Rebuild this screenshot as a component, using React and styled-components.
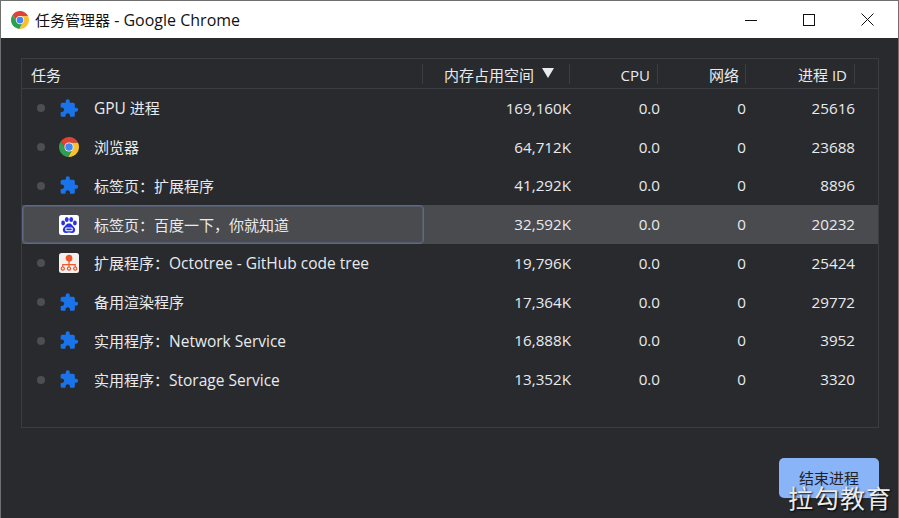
import React from 'react';
import styled, { createGlobalStyle } from 'styled-components';
import { MdExtension } from 'react-icons/md';

const FONT = '"Open Sans", "Noto Sans CJK SC", sans-serif';

const Global = createGlobalStyle`
html, body { margin: 0; padding: 0; background: #292a2d; }
* { box-sizing: border-box; }
`;

const Win = styled.div`
position: relative;
width: 899px;
height: 518px;
display: flex;
flex-direction: column;
overflow: hidden;
border: 1px solid #707070;
border-bottom: 0;
background: #292a2d;
font-family: ${FONT};
font-size: 15px;
color: #e8eaed;
`;

const TitleBar = styled.div`
height: 37px;
flex: none;
background: #fff;
display: flex;
align-items: center;
padding: 0 2px 0 10px;
color: #111;
`;

const Title = styled.div`
flex: 1;
margin-left: 6px;
font-size: 15px;
line-height: 36px;
white-space: nowrap;
`;

const TitleLatin = styled.span`
font-size: 16px;
`;

const WinBtn = styled.div`
width: 58px;
height: 37px;
display: flex;
align-items: center;
justify-content: center;
`;

const Content = styled.div`
flex: 1;
padding: 20px 19px 0 20px;
display: flex;
flex-direction: column;
`;

const Panel = styled.div`
height: 370px;
border: 1px solid #3c3d40;
`;

const Head = styled.div`
height: 30px;
display: grid;
grid-template-columns: 401px 147px 88px 88px 109px;
align-items: center;
border-bottom: 1px solid #3c3d40;
color: #e8eaed;
`;

const HeadCell = styled.div`
height: 20px;
line-height: 23px;
padding: ${p => (p.$first ? '0 0 0 9px' : `0 ${p.$pad || 7}px 0 0`)};
text-align: ${p => (p.$first ? 'left' : 'right')};
border-right: 1px solid #3c3d40;
white-space: nowrap;
`;

const Arrow = styled.span`
display: inline-block;
margin-left: 8px;
width: 0;
height: 0;
border-left: 6px solid transparent;
border-right: 6px solid transparent;
border-top: 10px solid #e8eaed;
vertical-align: 3px;
`;

const Row = styled.div`
position: relative;
height: 38.75px;
display: grid;
grid-template-columns: 402px 147px 89px 86px 109px;
align-items: center;
background: ${p => (p.$selected ? '#4a4b4e' : 'transparent')};
`;

const NameCell = styled.div`
height: 38.75px;
display: flex;
align-items: center;
padding-left: 14px;
white-space: nowrap;
border-radius: 4px;
border: 1px solid ${p => (p.$selected ? '#5b6a85' : 'transparent')};
box-shadow: ${p => (p.$selected ? 'inset 0 0 0 1px #525c6e' : 'none')};
`;

const Dot = styled.span`
flex: none;
width: 8px;
height: 8px;
border-radius: 50%;
background: ${p => (p.$hidden ? 'transparent' : '#4d4e51')};
margin-right: 14px;
`;

const IconBox = styled.span`
flex: none;
width: 20px;
height: 20px;
display: flex;
align-items: center;
justify-content: center;
margin-right: 15px;
`;

const Puzzle = styled(MdExtension)`
width: 21px;
height: 21px;
color: #1a73e8;
`;

const Label = styled.span`
white-space: pre;
`;

const Latin = styled.span`
font-size: 15.5px;
`;

const Num = styled.div`
text-align: right;
font-size: 15.2px;
margin-top: -1px;
`;

const Footer = styled.div`
display: flex;
justify-content: flex-end;
margin-top: 30px;
`;

const EndBtn = styled.div`
width: 100px;
height: 40px;
border-radius: 5px;
background: #8ab4f8;
color: #202124;
font-size: 15px;
padding-bottom: 2px;
display: flex;
align-items: center;
justify-content: center;
`;

const Watermark = styled.div`
position: absolute;
right: 6px;
bottom: 6px;
font-size: 25px;
line-height: 30px;
letter-spacing: 1px;
color: #ececec;
text-shadow: 1px 1px 2px #000;
font-family: "Noto Sans CJK SC", sans-serif;
white-space: nowrap;
`;

function ChromeLogo({ size = 18 }) {
  const seg = 'M24 14H45.8A24 24 0 0 0 4.44 10.12L15.34 29A10 10 0 0 1 24 14Z';
  return (
    <svg width={size} height={size} viewBox="0 0 48 48">
      <path d={seg} fill="#db4437" />
      <path d={seg} fill="#fbc02d" transform="rotate(120 24 24)" />
      <path d={seg} fill="#2e9e4f" transform="rotate(240 24 24)" />
      <circle cx="24" cy="24" r="11" fill="#fff" />
      <circle cx="24" cy="24" r="9" fill="#4285f4" />
    </svg>
  );
}

function BaiduLogo() {
  return (
    <svg width="20" height="20" viewBox="0 0 20 20">
      <rect width="20" height="20" rx="2.5" fill="#fff" />
      <g fill="#2932e1">
        <ellipse cx="4.1" cy="8" rx="1.9" ry="2.4" />
        <ellipse cx="7.8" cy="4.6" rx="1.9" ry="2.5" />
        <ellipse cx="12.2" cy="4.6" rx="1.9" ry="2.5" />
        <ellipse cx="15.9" cy="8" rx="1.9" ry="2.4" />
        <path d="M10 8.2c2 0 3 1.6 4.2 3 1.3 1.4 2.2 2.4 1.9 4.2-.3 1.8-1.9 2.7-3.4 2.5-1-.1-1.8-.4-2.7-.4s-1.7.3-2.7.4c-1.5.2-3.1-.7-3.4-2.5-.3-1.8.6-2.8 1.9-4.2 1.2-1.4 2.2-3 4.4-3z" />
      </g>
      <rect x="6.3" y="12.6" width="7.4" height="3.6" rx="1" fill="#fff" />
      <rect x="7.3" y="13.4" width="5.4" height="1.8" rx=".6" fill="#2932e1" />
    </svg>
  );
}

function OctotreeLogo() {
  return (
    <svg width="20" height="20" viewBox="0 0 20 20">
      <rect width="20" height="20" rx="2.5" fill="#f3f0ee" />
      <g fill="none" stroke="#f0562a" strokeWidth="1.2">
        <circle cx="10" cy="5.2" r="2.8" fill="#f0562a" />
        <path d="M10 8v3.4M3.8 14v-2.4h12.4V14M10 11.4V14" />
        <circle cx="3.8" cy="15.6" r="1.6" />
        <circle cx="10" cy="15.6" r="1.6" />
        <circle cx="16.2" cy="15.6" r="1.6" />
      </g>
    </svg>
  );
}

const rows = [
  { icon: 'puzzle', name: 'GPU', rest: ' 进程', mem: '169,160K', pid: '25616' },
  { icon: 'chrome', name: '', rest: '浏览器', mem: '64,712K', pid: '23688' },
  { icon: 'puzzle', name: '', rest: '标签页：扩展程序', mem: '41,292K', pid: '8896' },
  { icon: 'baidu', name: '', rest: '标签页：百度一下，你就知道', mem: '32,592K', pid: '20232', selected: true },
  { icon: 'octotree', pre: '扩展程序：', name: 'Octotree - GitHub code tree', mem: '19,796K', pid: '25424' },
  { icon: 'puzzle', name: '', rest: '备用渲染程序', mem: '17,364K', pid: '29772' },
  { icon: 'puzzle', pre: '实用程序：', name: 'Network Service', mem: '16,888K', pid: '3952' },
  { icon: 'puzzle', pre: '实用程序：', name: 'Storage Service', mem: '13,352K', pid: '3320' },
];

const icons = {
  puzzle: <Puzzle />,
  chrome: <ChromeLogo size={20} />,
  baidu: <BaiduLogo />,
  octotree: <OctotreeLogo />,
};

export default function App() {
  return (
    <Win>
      <Global />
      <TitleBar>
        <ChromeLogo size={18} />
        <Title>任务管理器<TitleLatin> - Google Chrome</TitleLatin></Title>
        <WinBtn>
          <svg width="12" height="12"><path d="M0 6.5H12" stroke="#111" /></svg>
        </WinBtn>
        <WinBtn>
          <svg width="12" height="12"><rect x=".5" y=".5" width="11" height="11" fill="none" stroke="#111" /></svg>
        </WinBtn>
        <WinBtn>
          <svg width="13" height="13"><path d="M.5 .5L12.5 12.5M12.5 .5L.5 12.5" stroke="#111" /></svg>
        </WinBtn>
      </TitleBar>
      <Content>
        <Panel>
          <Head>
            <HeadCell $first>任务</HeadCell>
            <HeadCell $pad={15}>内存占用空间<Arrow /></HeadCell>
            <HeadCell>CPU</HeadCell>
            <HeadCell $pad={6}>网络</HeadCell>
            <HeadCell>进程 ID</HeadCell>
          </Head>
          {rows.map(r => (
            <Row key={r.pid} $selected={r.selected}>
              <NameCell $selected={r.selected}>
                <Dot $hidden={r.selected} />
                <IconBox>{icons[r.icon]}</IconBox>
                <Label>{r.pre}<Latin>{r.name}</Latin>{r.rest}</Label>
              </NameCell>
              <Num>{r.mem}</Num>
              <Num>0.0</Num>
              <Num>0</Num>
              <Num>{r.pid}</Num>
            </Row>
          ))}
        </Panel>
        <Footer>
          <EndBtn>结束进程</EndBtn>
        </Footer>
      </Content>
      <Watermark>拉勾教育</Watermark>
    </Win>
  );
}
